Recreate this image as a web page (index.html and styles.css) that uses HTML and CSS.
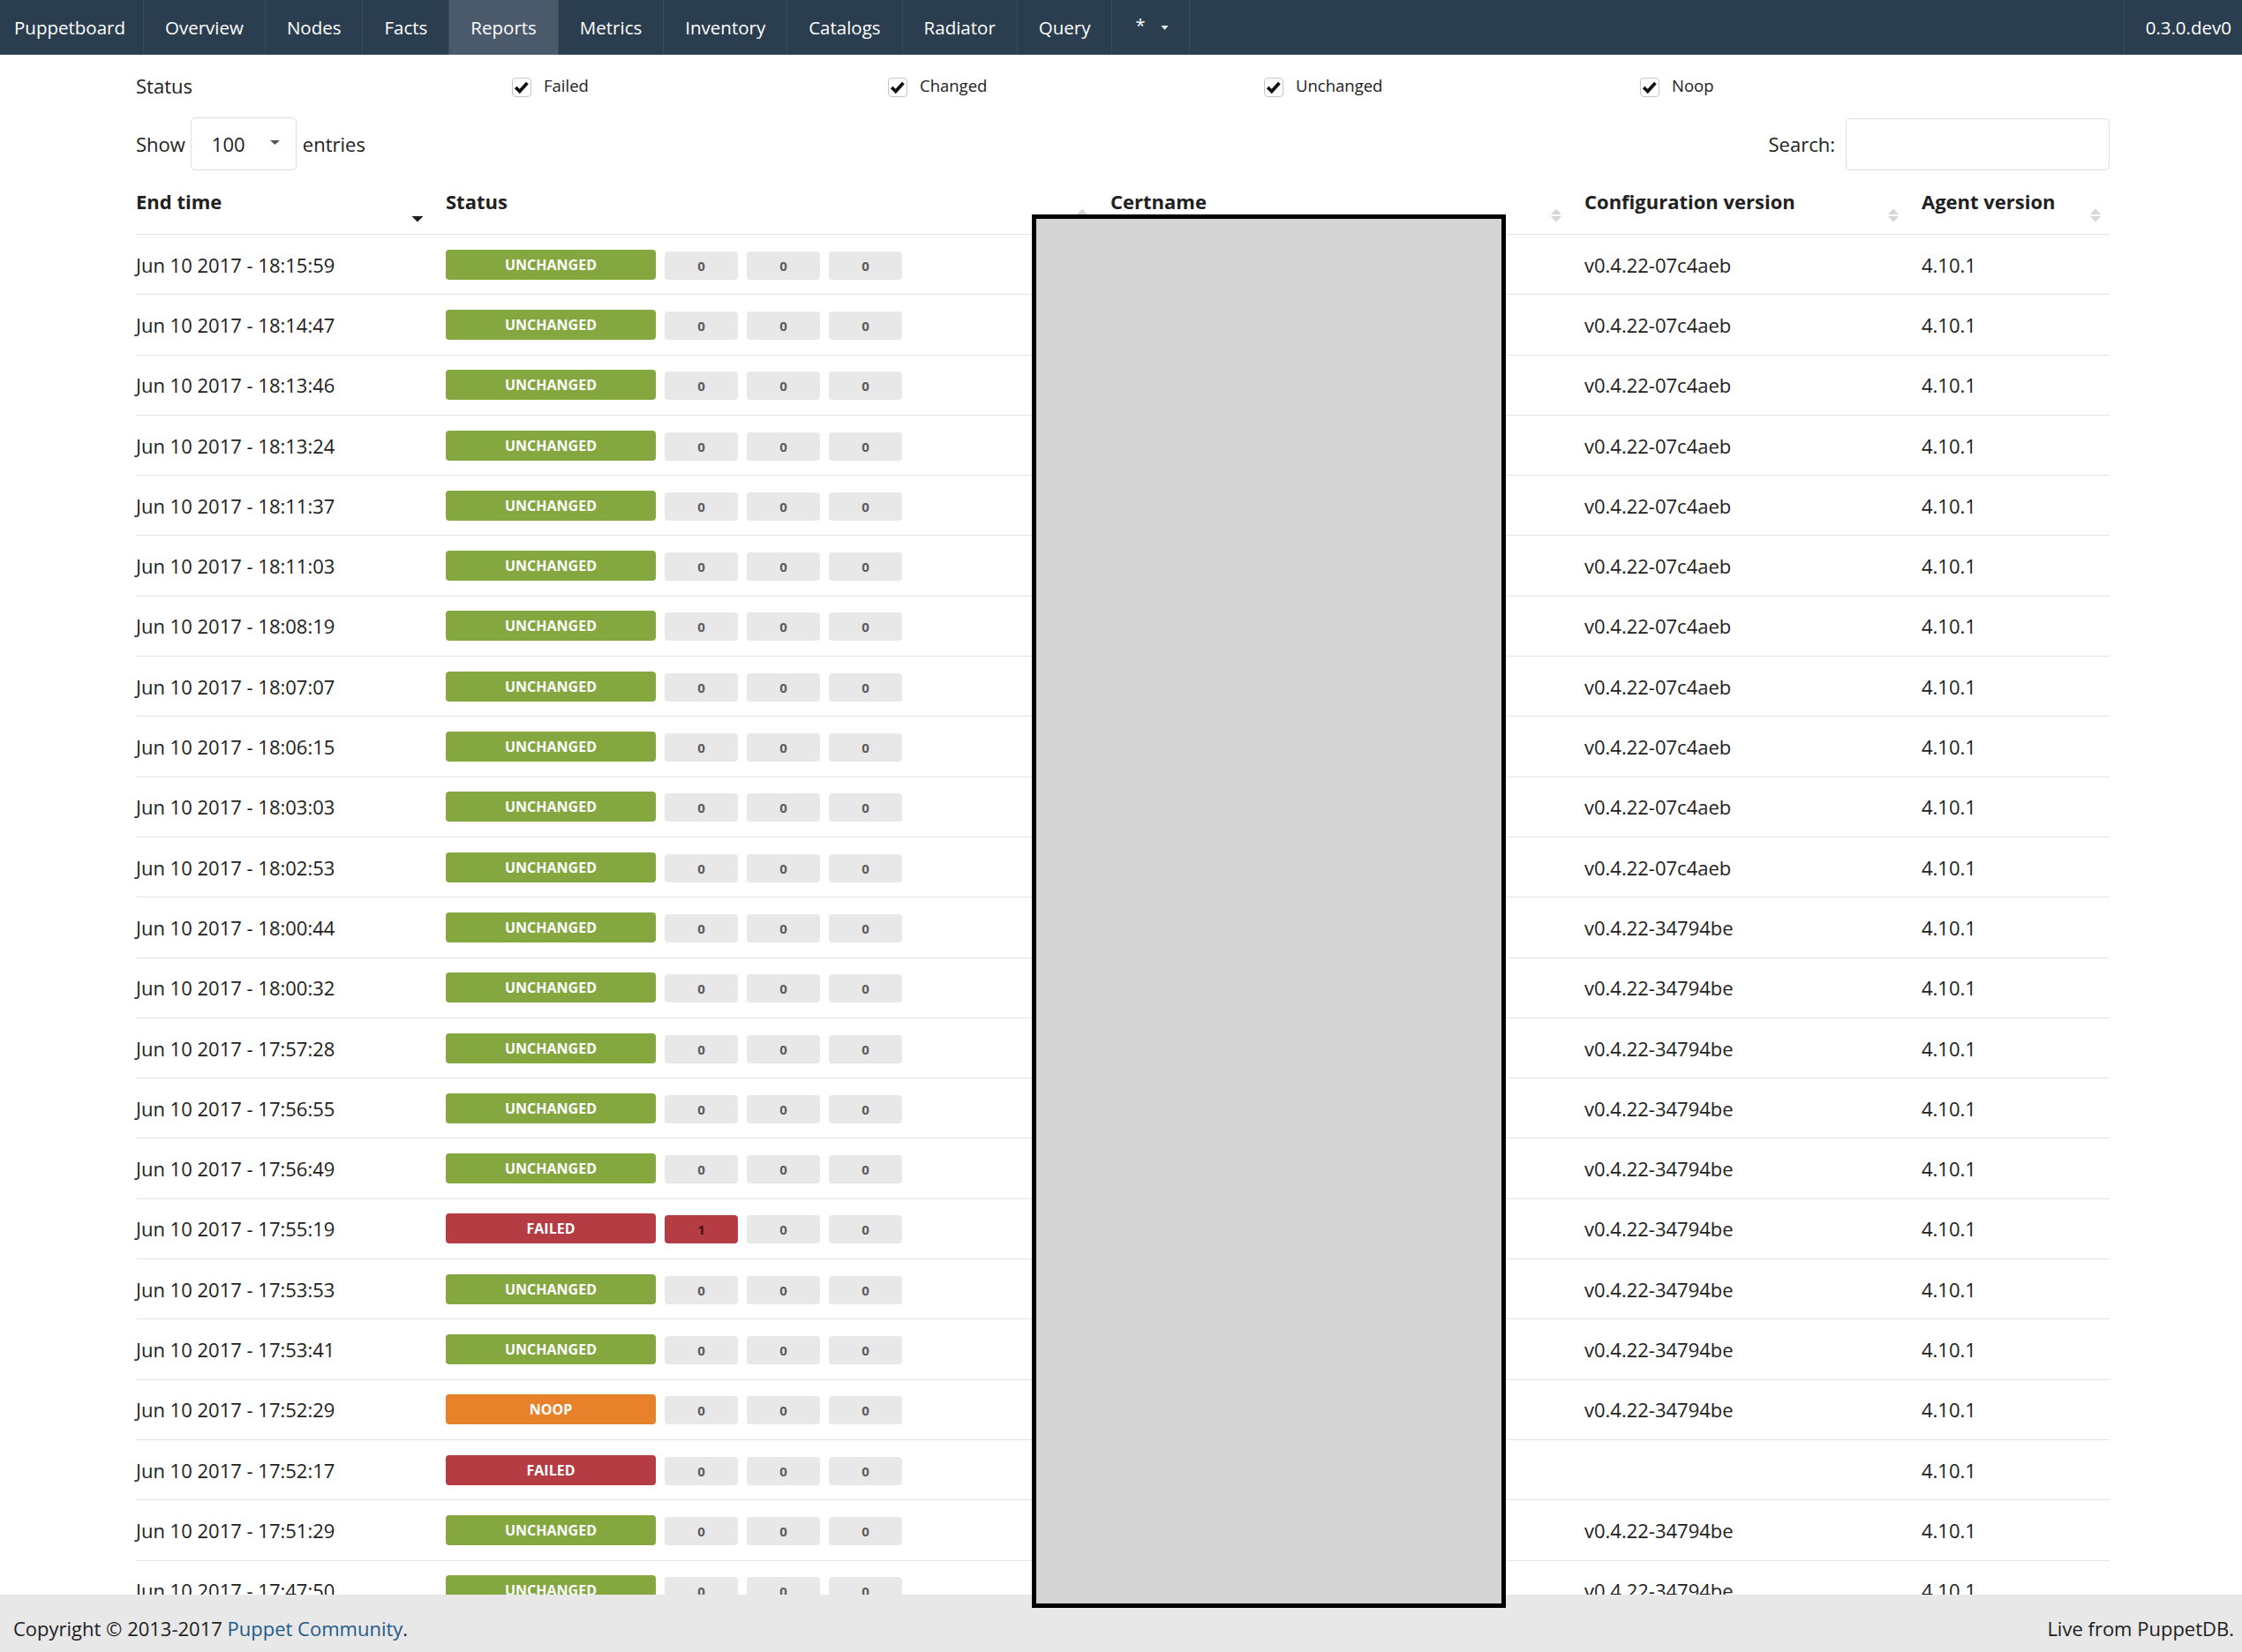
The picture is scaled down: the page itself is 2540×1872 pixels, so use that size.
FILE: index.html
```html
<!DOCTYPE html>
<html lang="en">
<head>
<meta charset="utf-8">
<title>Puppetboard - Reports</title>
<link rel="stylesheet" href="styles.css">
</head>
<body>
<nav class="topbar">
  <a class="nav-item brand">Puppetboard</a>
  <a class="nav-item">Overview</a>
  <a class="nav-item">Nodes</a>
  <a class="nav-item">Facts</a>
  <a class="nav-item active">Reports</a>
  <a class="nav-item">Metrics</a>
  <a class="nav-item">Inventory</a>
  <a class="nav-item">Catalogs</a>
  <a class="nav-item">Radiator</a>
  <a class="nav-item">Query</a>
  <a class="nav-item env"><span class="star">*</span><svg class="caret" viewBox="0 0 10 6"><path d="M0 0H10L5 6Z"/></svg></a>
  <span class="nav-spacer"></span>
  <span class="nav-item nav-right">0.3.0.dev0</span>
</nav>

<main class="content">
  <div class="container">
    <div class="filters">
      <span class="filter-title">Status</span>
      <label class="check"><span class="box"><svg viewBox="0 0 22 22"><path d="M3.5 11L8.5 16L18 5.5"/></svg></span>Failed</label>
      <label class="check"><span class="box"><svg viewBox="0 0 22 22"><path d="M3.5 11L8.5 16L18 5.5"/></svg></span>Changed</label>
      <label class="check"><span class="box"><svg viewBox="0 0 22 22"><path d="M3.5 11L8.5 16L18 5.5"/></svg></span>Unchanged</label>
      <label class="check"><span class="box"><svg viewBox="0 0 22 22"><path d="M3.5 11L8.5 16L18 5.5"/></svg></span>Noop</label>
    </div>

    <div class="controls">
      <div class="show">Show <span class="select"><span>100</span><svg class="sel-caret" viewBox="0 0 11 5"><path d="M0 0H11L5.5 5Z"/></svg></span> entries</div>
      <div class="search">Search:<span class="search-input"></span></div>
    </div>

    <table class="reports">
      <colgroup>
        <col class="c-time"><col class="c-status"><col class="c-cert"><col class="c-conf"><col class="c-agent">
      </colgroup>
      <thead>
        <tr>
          <th><div class="th-in"><span>End time</span><svg class="sort desc" viewBox="0 0 14 16"><path d="M0.5 9H13.5L7 15.5Z"/></svg></div></th>
          <th><div class="th-in"><span>Status</span><svg class="sort" viewBox="0 0 14 16"><path d="M1 7L7 0.5L13 7Z"/><path d="M1 9H13L7 15.5Z"/></svg></div></th>
          <th><div class="th-in"><span>Certname</span><svg class="sort" viewBox="0 0 14 16"><path d="M1 7L7 0.5L13 7Z"/><path d="M1 9H13L7 15.5Z"/></svg></div></th>
          <th><div class="th-in"><span>Configuration version</span><svg class="sort" viewBox="0 0 14 16"><path d="M1 7L7 0.5L13 7Z"/><path d="M1 9H13L7 15.5Z"/></svg></div></th>
          <th><div class="th-in"><span>Agent version</span><svg class="sort" viewBox="0 0 14 16"><path d="M1 7L7 0.5L13 7Z"/><path d="M1 9H13L7 15.5Z"/></svg></div></th>
        </tr>
      </thead>
      <tbody>
        <tr><td>Jun 10 2017 - 18:15:59</td><td><div class="status"><span class="lbl unchanged">UNCHANGED</span><span class="cnt">0</span><span class="cnt">0</span><span class="cnt">0</span></div></td><td></td><td>v0.4.22-07c4aeb</td><td>4.10.1</td></tr>
        <tr><td>Jun 10 2017 - 18:14:47</td><td><div class="status"><span class="lbl unchanged">UNCHANGED</span><span class="cnt">0</span><span class="cnt">0</span><span class="cnt">0</span></div></td><td></td><td>v0.4.22-07c4aeb</td><td>4.10.1</td></tr>
        <tr><td>Jun 10 2017 - 18:13:46</td><td><div class="status"><span class="lbl unchanged">UNCHANGED</span><span class="cnt">0</span><span class="cnt">0</span><span class="cnt">0</span></div></td><td></td><td>v0.4.22-07c4aeb</td><td>4.10.1</td></tr>
        <tr><td>Jun 10 2017 - 18:13:24</td><td><div class="status"><span class="lbl unchanged">UNCHANGED</span><span class="cnt">0</span><span class="cnt">0</span><span class="cnt">0</span></div></td><td></td><td>v0.4.22-07c4aeb</td><td>4.10.1</td></tr>
        <tr><td>Jun 10 2017 - 18:11:37</td><td><div class="status"><span class="lbl unchanged">UNCHANGED</span><span class="cnt">0</span><span class="cnt">0</span><span class="cnt">0</span></div></td><td></td><td>v0.4.22-07c4aeb</td><td>4.10.1</td></tr>
        <tr><td>Jun 10 2017 - 18:11:03</td><td><div class="status"><span class="lbl unchanged">UNCHANGED</span><span class="cnt">0</span><span class="cnt">0</span><span class="cnt">0</span></div></td><td></td><td>v0.4.22-07c4aeb</td><td>4.10.1</td></tr>
        <tr><td>Jun 10 2017 - 18:08:19</td><td><div class="status"><span class="lbl unchanged">UNCHANGED</span><span class="cnt">0</span><span class="cnt">0</span><span class="cnt">0</span></div></td><td></td><td>v0.4.22-07c4aeb</td><td>4.10.1</td></tr>
        <tr><td>Jun 10 2017 - 18:07:07</td><td><div class="status"><span class="lbl unchanged">UNCHANGED</span><span class="cnt">0</span><span class="cnt">0</span><span class="cnt">0</span></div></td><td></td><td>v0.4.22-07c4aeb</td><td>4.10.1</td></tr>
        <tr><td>Jun 10 2017 - 18:06:15</td><td><div class="status"><span class="lbl unchanged">UNCHANGED</span><span class="cnt">0</span><span class="cnt">0</span><span class="cnt">0</span></div></td><td></td><td>v0.4.22-07c4aeb</td><td>4.10.1</td></tr>
        <tr><td>Jun 10 2017 - 18:03:03</td><td><div class="status"><span class="lbl unchanged">UNCHANGED</span><span class="cnt">0</span><span class="cnt">0</span><span class="cnt">0</span></div></td><td></td><td>v0.4.22-07c4aeb</td><td>4.10.1</td></tr>
        <tr><td>Jun 10 2017 - 18:02:53</td><td><div class="status"><span class="lbl unchanged">UNCHANGED</span><span class="cnt">0</span><span class="cnt">0</span><span class="cnt">0</span></div></td><td></td><td>v0.4.22-07c4aeb</td><td>4.10.1</td></tr>
        <tr><td>Jun 10 2017 - 18:00:44</td><td><div class="status"><span class="lbl unchanged">UNCHANGED</span><span class="cnt">0</span><span class="cnt">0</span><span class="cnt">0</span></div></td><td></td><td>v0.4.22-34794be</td><td>4.10.1</td></tr>
        <tr><td>Jun 10 2017 - 18:00:32</td><td><div class="status"><span class="lbl unchanged">UNCHANGED</span><span class="cnt">0</span><span class="cnt">0</span><span class="cnt">0</span></div></td><td></td><td>v0.4.22-34794be</td><td>4.10.1</td></tr>
        <tr><td>Jun 10 2017 - 17:57:28</td><td><div class="status"><span class="lbl unchanged">UNCHANGED</span><span class="cnt">0</span><span class="cnt">0</span><span class="cnt">0</span></div></td><td></td><td>v0.4.22-34794be</td><td>4.10.1</td></tr>
        <tr><td>Jun 10 2017 - 17:56:55</td><td><div class="status"><span class="lbl unchanged">UNCHANGED</span><span class="cnt">0</span><span class="cnt">0</span><span class="cnt">0</span></div></td><td></td><td>v0.4.22-34794be</td><td>4.10.1</td></tr>
        <tr><td>Jun 10 2017 - 17:56:49</td><td><div class="status"><span class="lbl unchanged">UNCHANGED</span><span class="cnt">0</span><span class="cnt">0</span><span class="cnt">0</span></div></td><td></td><td>v0.4.22-34794be</td><td>4.10.1</td></tr>
        <tr><td>Jun 10 2017 - 17:55:19</td><td><div class="status"><span class="lbl failed">FAILED</span><span class="cnt bad">1</span><span class="cnt">0</span><span class="cnt">0</span></div></td><td></td><td>v0.4.22-34794be</td><td>4.10.1</td></tr>
        <tr><td>Jun 10 2017 - 17:53:53</td><td><div class="status"><span class="lbl unchanged">UNCHANGED</span><span class="cnt">0</span><span class="cnt">0</span><span class="cnt">0</span></div></td><td></td><td>v0.4.22-34794be</td><td>4.10.1</td></tr>
        <tr><td>Jun 10 2017 - 17:53:41</td><td><div class="status"><span class="lbl unchanged">UNCHANGED</span><span class="cnt">0</span><span class="cnt">0</span><span class="cnt">0</span></div></td><td></td><td>v0.4.22-34794be</td><td>4.10.1</td></tr>
        <tr><td>Jun 10 2017 - 17:52:29</td><td><div class="status"><span class="lbl noop">NOOP</span><span class="cnt">0</span><span class="cnt">0</span><span class="cnt">0</span></div></td><td></td><td>v0.4.22-34794be</td><td>4.10.1</td></tr>
        <tr><td>Jun 10 2017 - 17:52:17</td><td><div class="status"><span class="lbl failed">FAILED</span><span class="cnt">0</span><span class="cnt">0</span><span class="cnt">0</span></div></td><td></td><td></td><td>4.10.1</td></tr>
        <tr><td>Jun 10 2017 - 17:51:29</td><td><div class="status"><span class="lbl unchanged">UNCHANGED</span><span class="cnt">0</span><span class="cnt">0</span><span class="cnt">0</span></div></td><td></td><td>v0.4.22-34794be</td><td>4.10.1</td></tr>
        <tr><td>Jun 10 2017 - 17:47:50</td><td><div class="status"><span class="lbl unchanged">UNCHANGED</span><span class="cnt">0</span><span class="cnt">0</span><span class="cnt">0</span></div></td><td></td><td>v0.4.22-34794be</td><td>4.10.1</td></tr>
      </tbody>
    </table>
  </div>
</main>

<footer class="footer">
  <span>Copyright © 2013-2017 <a class="link">Puppet Community</a>.</span>
  <span>Live from PuppetDB.</span>
</footer>

<div class="redact"></div>
</body>
</html>
```

FILE: styles.css
```css
html, body {
  margin: 0;
  padding: 0;
}

body {
  height: 100vh;
  display: flex;
  flex-direction: column;
  overflow: hidden;
  position: relative;
  font-family: "Open Sans", "DejaVu Sans", sans-serif;
  font-size: 22px;
  line-height: 30px;
  color: #212121;
  background: #fff;
}

/* ---------- top menu ---------- */
.topbar {
  flex-shrink: 0;
  height: 62px;
  display: flex;
  background: #2b3e50;
  font-family: "Open Sans", sans-serif;
  font-weight: 400;
  font-size: 20.5px;
  color: #fff;
}

.nav-item {
  display: flex;
  align-items: center;
  padding: 0 24px;
  border-right: 1px solid #3b4d5f;
  white-space: nowrap;
}

.nav-item.brand {
  padding: 0 20px 0 16px;
}

.nav-item.active {
  background: #4a5a6b;
}

.nav-item.env {
  padding: 0 23px 0 26px;
  gap: 18px;
}

.star {
  font-size: 20px;
  margin-top: -4px;
}

.caret {
  width: 9px;
  height: 5px;
  fill: #e6e9ec;
}

.nav-spacer {
  flex: 1;
}

.nav-right {
  border-right: none;
  border-left: 1px solid #3b4d5f;
  padding: 0 12px 0 24px;
}

/* ---------- content ---------- */
.content {
  flex: 1;
  min-height: 0;
  overflow: hidden;
}

.container {
  width: 2236px;
  margin-left: 154px;
}

.filters {
  display: grid;
  grid-template-columns: repeat(5, 426px);
  align-items: center;
  height: 30px;
  margin-top: 20px;
}

.check {
  display: flex;
  align-items: center;
  gap: 14px;
  font-size: 18.5px;
}

.box {
  width: 22px;
  height: 22px;
  box-sizing: border-box;
  border: 1px solid #c6c6c6;
  border-radius: 4px;
  margin-top: 4px;
  display: flex;
}

.box svg {
  width: 20px;
  height: 20px;
  fill: none;
  stroke: #111;
  stroke-width: 4.2;
}

.controls {
  display: flex;
  justify-content: space-between;
  align-items: center;
  height: 60px;
  margin-top: 21px;
}

.show {
  display: flex;
  align-items: center;
  gap: 6px;
}

.select {
  width: 120px;
  height: 60px;
  box-sizing: border-box;
  border: 1px solid #dedede;
  border-radius: 5px;
  display: flex;
  align-items: center;
  justify-content: space-between;
  padding: 0 18px 0 23px;
  margin-right: 1px;
}

.sel-caret {
  width: 11px;
  height: 5px;
  fill: #555;
  margin-top: -3px;
}

.search {
  display: flex;
  align-items: center;
  gap: 12px;
}

.search-input {
  width: 299px;
  height: 59px;
  box-sizing: border-box;
  border: 1px solid #dedede;
  border-radius: 5px;
}

/* ---------- table ---------- */
.reports {
  width: 2236px;
  table-layout: fixed;
  border-collapse: separate;
  border-spacing: 0;
  margin-top: 2px;
}

.c-time { width: 335px; }
.c-status { width: 753px; }
.c-cert { width: 537px; }
.c-conf { width: 382px; }
.c-agent { width: 229px; }

.reports th {
  text-align: left;
  vertical-align: top;
  font-weight: 700;
  padding: 18px 9px 13px 16px;
  border-bottom: 1px solid #e3e3e3;
}

.reports th:first-child,
.reports td:first-child {
  padding-left: 0;
}

.th-in {
  display: flex;
  justify-content: space-between;
  height: 39px;
  white-space: nowrap;
}

.sort {
  align-self: flex-end;
  width: 14px;
  height: 16px;
  fill: #d6d6d6;
  flex-shrink: 0;
}

.sort.desc {
  fill: #1e1e1e;
}

.reports td {
  height: 68.3px;
  box-sizing: border-box;
  padding: 0 16px;
  border-bottom: 1px solid #e3e3e3;
  vertical-align: middle;
  white-space: nowrap;
}

.status {
  display: flex;
  align-items: flex-end;
  gap: 10px;
  height: 34px;
}

.lbl {
  width: 238px;
  height: 34px;
  line-height: 34px;
  border-radius: 4px;
  text-align: center;
  color: #fff;
  font-size: 16px;
  font-weight: 700;
}

.lbl.unchanged { background: #84a73f; }
.lbl.failed { background: #b53c42; }
.lbl.noop { background: #e8822a; }

.cnt {
  width: 83px;
  height: 32px;
  line-height: 32px;
  border-radius: 4px;
  background: #e8e8e8;
  color: #5c5c5c;
  text-align: center;
  font-size: 15px;
  font-weight: 700;
}

.cnt.bad {
  background: #b53c42;
  color: #3f1416;
}

/* ---------- footer ---------- */
.footer {
  flex-shrink: 0;
  height: 65px;
  box-sizing: border-box;
  padding: 23px 9px 0 15px;
  background: #e8e8e8;
  display: flex;
  justify-content: space-between;
}

.link {
  color: #1e5a8c;
}

/* redaction block laid over the certname column */
.redact {
  position: absolute;
  left: 1169px;
  top: 243px;
  width: 537px;
  height: 1579px;
  box-sizing: border-box;
  border: 5px solid #000;
  background: #d4d4d4;
}
```
